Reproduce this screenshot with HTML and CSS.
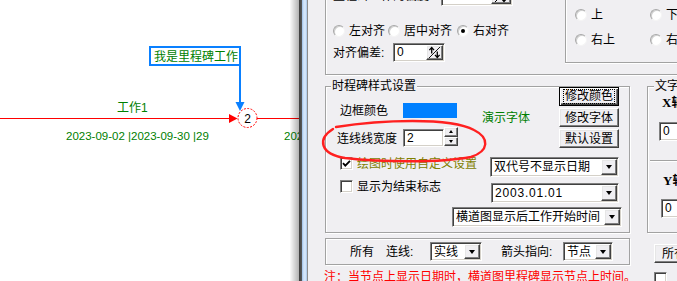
FILE: index.html
```html
<!DOCTYPE html>
<html lang="zh-CN">
<head>
    <meta charset="UTF-8">
    <meta name="viewport" content="width=device-width, initial-scale=1.0">
    <title>里程碑设置</title>
    <link rel="stylesheet" href="styles.css">
</head>
<body>
    <div class="screen">
        <!-- 横道图画布 -->
        <div class="canvas">
            <svg class="diagram" width="299" height="281" viewBox="0 0 299 281">
                <line x1="0" y1="118.5" x2="230" y2="118.5" stroke="#f00" stroke-width="1"/>
                <polygon points="229,114 229,123 237.5,118.5" fill="#f00"/>
                <line x1="257" y1="118.5" x2="299" y2="118.5" stroke="#f00" stroke-width="1"/>
                <circle cx="247.5" cy="118" r="9.5" fill="#fff" stroke="#f00" stroke-width="1" stroke-dasharray="2 1.4"/>
                <text x="247.5" y="122.5" text-anchor="middle" class="node-num">2</text>
                <rect x="150" y="47" width="90" height="18" fill="#fff" stroke="#0a80ff" stroke-width="2"/>
                <text x="154" y="61" class="label">我是里程碑工作</text>
                <line x1="240" y1="66" x2="240" y2="104" stroke="#0a80ff" stroke-width="2"/>
                <polygon points="235.5,102 244.5,102 240,111" fill="#0a80ff"/>
                <text x="117" y="112" class="label">工作1</text>
                <text x="66" y="140" class="dates">2023-09-02 |2023-09-30 |29</text>
                <text x="284" y="140" class="dates">202</text>
            </svg>
        </div>
        <div class="frame"></div>

        <!-- 对话框 -->
        <div class="dialog">
            <div class="group top-group">
                <div class="align-col">
                    <div class="offset-row">
                        <span class="offset-label">里程碑工作的偏度</span>
                        <div class="sunken offset-field">
                            <span class="field-text">10</span>
                            <span class="raised diag-btn">
                                <svg width="14" height="14" viewBox="0 0 14 14"><line x1="1" y1="13" x2="13" y2="1" stroke="#000"/><path d="M4 8V2M1.5 4.5L4 1.5 6.5 4.5" fill="none" stroke="#000" stroke-width="1.4"/><path d="M10 6v6M7.5 9.5L10 12.5 12.5 9.5" fill="none" stroke="#000" stroke-width="1.4"/></svg>
                            </span>
                        </div>
                    </div>
                    <div class="radio-row">
                        <span class="radio-item w55"><span class="radio"></span>左对齐</span>
                        <span class="radio-item w69"><span class="radio"></span>居中对齐</span>
                        <span class="radio-item"><span class="radio checked"></span>右对齐</span>
                    </div>
                    <div class="dev-row">
                        <span class="dev-label">对齐偏差:</span>
                        <div class="sunken dev-field">
                            <span class="field-text">0</span>
                            <span class="raised diag-btn small">
                                <svg width="13" height="13" viewBox="0 0 14 14"><line x1="1" y1="13" x2="13" y2="1" stroke="#000"/><path d="M4 8V2M1.5 4.5L4 1.5 6.5 4.5" fill="none" stroke="#000" stroke-width="1.4"/><path d="M10 6v6M7.5 9.5L10 12.5 12.5 9.5" fill="none" stroke="#000" stroke-width="1.4"/></svg>
                            </span>
                        </div>
                    </div>
                </div>
                <div class="pos-group">
                    <span class="radio-item"><span class="radio"></span>上</span>
                    <span class="radio-item"><span class="radio"></span>下</span>
                    <span class="radio-item"><span class="radio"></span>右上</span>
                    <span class="radio-item"><span class="radio"></span>右</span>
                </div>
            </div>

            <div class="mid">
                <div class="group style-group">
                    <span class="legend">时程碑样式设置</span>
                    <div class="sg-top">
                        <div class="sg-left">
                            <div class="color-row">
                                <span class="color-label">边框颜色</span>
                                <span class="swatch"></span>
                                <span class="demo-font">演示字体</span>
                            </div>
                            <div class="width-row">
                                <span class="width-label">连线线宽度</span>
                                <div class="sunken width-field"><span class="field-text">2</span></div>
                                <div class="spinner">
                                    <span class="raised spin-btn"><span class="tri-up"></span></span>
                                    <span class="raised spin-btn"><span class="tri-down small"></span></span>
                                </div>
                            </div>
                        </div>
                        <div class="sg-buttons">
                            <button class="btn default"><span class="focus">修改颜色</span></button>
                            <button class="btn raised">修改字体</button>
                            <button class="btn raised">默认设置</button>
                        </div>
                    </div>
                    <div class="sg-mid">
                        <div class="checks">
                            <div class="check-row olive">
                                <span class="sunken checkbox">
                                    <svg width="9" height="9" viewBox="0 0 9 9"><path d="M1 4.2L3.3 6.6 8 1.8" fill="none" stroke="#000" stroke-width="1.8"/></svg>
                                </span>
                                绘图时使用自定义设置
                            </div>
                            <div class="check-row second">
                                <span class="sunken checkbox"></span>
                                显示为结束标志
                            </div>
                        </div>
                        <div class="combos">
                            <div class="sunken combo">
                                <span class="combo-text">双代号不显示日期</span>
                                <span class="raised drop"><span class="tri-down"></span></span>
                            </div>
                            <div class="sunken combo date-combo">
                                <span class="combo-text date">2003.01.01</span>
                                <span class="raised drop"><span class="tri-down"></span></span>
                            </div>
                        </div>
                    </div>
                    <div class="sunken combo wide-combo">
                        <span class="combo-text">横道图显示后工作开始时间</span>
                        <span class="raised drop"><span class="tri-down"></span></span>
                    </div>
                </div>

                <div class="group text-group">
                    <span class="legend">文字</span>
                    <div class="axis"><span class="axis-letter">X</span>轴</div>
                    <div class="sunken axis-field"><span class="field-text">0</span></div>
                    <div class="sep"></div>
                    <div class="axis y"><span class="axis-letter">Y</span>轴</div>
                    <div class="sunken axis-field y"><span class="field-text">0</span></div>
                </div>
            </div>

            <div class="bottom">
                <div class="group line-group">
                    <span class="lg-all">所有</span>
                    <span class="lg-line">连线:</span>
                    <div class="sunken combo small-combo">
                        <span class="combo-text">实线</span>
                        <span class="raised drop"><span class="tri-down"></span></span>
                    </div>
                    <span class="lg-arrow">箭头指向:</span>
                    <div class="sunken combo small-combo node">
                        <span class="combo-text">节点</span>
                        <span class="raised drop"><span class="tri-down"></span></span>
                    </div>
                </div>
                <button class="btn raised all-btn">所有设置</button>
            </div>

            <div class="note-row">
                <span class="note">注：当节点上显示日期时，横道图里程碑显示节点上时间。</span>
                <span class="sunken checkbox note-check"></span>
            </div>
        </div>

        <!-- 手绘标注 -->
        <svg class="mark" width="677" height="281" viewBox="0 0 677 281">
            <path d="M336 127 C380 120 450 117 474 130 C490 138 489 151 471 157 C440 163 380 162 345 158 C320 154 317 139 333 129" fill="none" stroke="#ff2020" stroke-width="2.4" stroke-linecap="round"/>
        </svg>
    </div>
</body>
</html>
```

FILE: styles.css
```css
* {
    box-sizing: border-box;
}

body {
    margin: 0;
    background: #fff;
    font-family: "Liberation Sans", "Noto Sans CJK SC", sans-serif;
    font-size: 12px;
    line-height: 14px;
    color: #000;
}

.screen {
    position: relative;
    display: flex;
    width: 677px;
    height: 281px;
    overflow: hidden;
}

/* 画布 */
.canvas {
    position: relative;
    width: 299px;
    height: 281px;
    flex: none;
    background: #fff;
}

.canvas::after {
    content: "";
    position: absolute;
    top: 0;
    right: 0;
    width: 9px;
    height: 100%;
    background: linear-gradient(to right, rgba(0, 0, 0, 0.02), rgba(0, 0, 0, 0.3));
}

.diagram {
    display: block;
}

.diagram .label {
    font-family: "Liberation Sans", "Noto Sans CJK SC", sans-serif;
    font-size: 12px;
    fill: #008000;
}

.diagram .dates {
    font-family: "Liberation Sans", sans-serif;
    font-size: 11.5px;
    fill: #008000;
}

.diagram .node-num {
    font-family: "Liberation Sans", sans-serif;
    font-size: 12px;
    fill: #000;
}

.frame {
    width: 9px;
    flex: none;
    background: linear-gradient(to right, #3c3c3c 0, #5a5a5a 3px, #9dbfe8 3px, #d6e7fb 5px, #cfe2f8 7px, #9cbbe2 8px, #8d8d8d 8px);
}

/* 对话框 */
.dialog {
    width: 369px;
    flex: none;
    padding-left: 17px;
    background: #f0eff2;
    overflow: hidden;
}

.group {
    position: relative;
    border: 1px solid #a2a2a2;
    box-shadow: inset 1px 1px 0 #fff, 1px 1px 0 #fff;
}

.legend {
    position: absolute;
    top: -8px;
    left: 5px;
    padding: 0 1px;
    background: #f0eff2;
}

.sunken {
    background: #fff;
    border: 1px solid;
    border-color: #808080 #fff #fff #808080;
    box-shadow: inset 1px 1px 0 #404040, inset -1px -1px 0 #d4d0c8;
}

.raised {
    background: #f0eff2;
    border: 1px solid;
    border-color: #fff #404040 #404040 #fff;
    box-shadow: inset -1px -1px 0 #808080, inset 1px 1px 0 #e6e6e6;
}

.field-text {
    padding-left: 2px;
    line-height: 15px;
}

/* 顶部分组 */
.top-group {
    display: flex;
    width: 400px;
    height: 105px;
    margin-top: -30px;
    border-right: 0;
}

.align-col {
    width: 239px;
    flex: none;
    padding: 15px 0 0 7px;
}

.offset-row {
    display: flex;
    align-items: center;
    height: 20px;
}

.offset-label {
    width: 108px;
    flex: none;
}

.offset-field {
    display: flex;
    align-items: center;
    width: 72px;
    height: 20px;
    padding: 1px;
}

.diag-btn {
    display: flex;
    align-items: center;
    justify-content: center;
    width: 20px;
    height: 16px;
    margin-left: auto;
}

.diag-btn.small {
    width: 17px;
    height: 15px;
}

.radio-row {
    display: flex;
    align-items: center;
    height: 14px;
    margin-top: 18px;
}

.radio-item {
    display: flex;
    align-items: center;
    gap: 4px;
    white-space: nowrap;
}

.w55 {
    width: 55px;
}

.w69 {
    width: 69px;
}

.radio {
    position: relative;
    width: 12px;
    height: 12px;
    flex: none;
    border-radius: 50%;
    background: #fff;
    border: 1px solid;
    border-color: #a8a8a8 #f4f4f4 #f4f4f4 #a8a8a8;
    box-shadow: inset 1px 1px 0 #d0d0d0;
}

.radio.checked::after {
    content: "";
    position: absolute;
    top: 3px;
    left: 3px;
    width: 4px;
    height: 4px;
    border-radius: 50%;
    background: #000;
}

.dev-row {
    display: flex;
    align-items: center;
    height: 19px;
    margin-top: 5px;
}

.dev-label {
    width: 60px;
    flex: none;
}

.dev-field {
    display: flex;
    align-items: center;
    width: 52px;
    height: 19px;
    padding: 1px;
}

.pos-group {
    display: grid;
    grid-template-columns: 75px 75px;
    align-content: start;
    row-gap: 13px;
    width: 160px;
    height: 92px;
    padding: 38px 0 0 9px;
    border-left: 1px solid #a2a2a2;
    border-bottom: 1px solid #a2a2a2;
    box-shadow: inset 1px 0 0 #fff, 0 1px 0 #fff;
}

.pos-group .radio-item {
    height: 12px;
}

/* 中部分组 */
.mid {
    display: flex;
    align-items: flex-start;
    margin-top: 11px;
}

.style-group {
    width: 305px;
    height: 147px;
    flex: none;
}

.sg-top {
    display: flex;
    height: 62px;
}

.sg-left {
    width: 233px;
    flex: none;
    padding-left: 14px;
}

.color-row {
    display: flex;
    align-items: center;
    height: 15px;
    margin-top: 16px;
}

.color-label {
    width: 48px;
    flex: none;
}

.swatch {
    width: 54px;
    height: 15px;
    margin-left: 15px;
    background: #0080ff;
}

.demo-font {
    align-self: flex-start;
    margin: 8px 0 0 25px;
    color: #008000;
    white-space: nowrap;
}

.width-row {
    display: flex;
    align-items: flex-start;
    height: 21px;
    margin: 9px 0 0 -3px;
}

.width-label {
    width: 66px;
    flex: none;
    margin-top: 5px;
}

.width-field {
    display: flex;
    align-items: center;
    width: 41px;
    height: 18px;
    margin-top: 2px;
    padding: 1px;
}

.spinner {
    display: flex;
    flex-direction: column;
    width: 14px;
    height: 19px;
}

.spin-btn {
    display: flex;
    align-items: center;
    justify-content: center;
    flex: 1;
}

.tri-up {
    width: 0;
    height: 0;
    border-left: 2.5px solid transparent;
    border-right: 2.5px solid transparent;
    border-bottom: 3px solid #000;
}

.tri-down {
    width: 0;
    height: 0;
    border-left: 3.5px solid transparent;
    border-right: 3.5px solid transparent;
    border-top: 4px solid #000;
}

.tri-down.small {
    border-left-width: 2.5px;
    border-right-width: 2.5px;
    border-top-width: 3px;
}

.sg-buttons {
    display: flex;
    flex-direction: column;
    gap: 2px;
}

.btn {
    width: 60px;
    height: 19px;
    padding: 0;
    font: inherit;
    line-height: 14px;
    color: #000;
    cursor: default;
}

.btn.default {
    display: flex;
    align-items: center;
    justify-content: center;
    background: #f0eff2;
    border: 1px solid #000;
    box-shadow: inset 1px 1px 0 #fff, inset -1px -1px 0 #404040, inset -2px -2px 0 #808080;
}

.focus {
    padding: 0 1px;
    outline: 1px dotted #000;
    outline-offset: 0;
    line-height: 13px;
}

.sg-mid {
    display: flex;
    align-items: flex-start;
    margin-top: 8px;
}

.checks {
    width: 164px;
    flex: none;
    padding-left: 14px;
}

.check-row {
    display: flex;
    align-items: center;
    gap: 4px;
    height: 13px;
    white-space: nowrap;
}

.check-row.second {
    margin-top: 10px;
}

.olive {
    color: #808000;
}

.checkbox {
    display: flex;
    align-items: center;
    justify-content: center;
    width: 13px;
    height: 13px;
    flex: none;
}

.combos {
    width: 129px;
}

.combo {
    display: flex;
    align-items: center;
    height: 20px;
    padding: 1px;
}

.date-combo {
    width: 128px;
    margin: 6px 0 0 1px;
}

.combo-text {
    flex: 1;
    padding-left: 2px;
    line-height: 16px;
    white-space: nowrap;
    overflow: hidden;
}

.combo-text.date {
    letter-spacing: 0.8px;
}

.drop {
    display: flex;
    align-items: center;
    justify-content: center;
    width: 16px;
    height: 16px;
    flex: none;
}

.wide-combo {
    width: 170px;
    margin: 4px 0 0 126px;
}

.text-group {
    width: 100px;
    height: 147px;
    flex: none;
    margin-left: 17px;
    border-right: 0;
}

.text-group .legend {
    left: 6px;
}

.axis {
    margin: 9px 0 0 14px;
    font-weight: bold;
}

.axis.y {
    margin-top: 12px;
    padding-left: 1px;
}

.axis-letter {
    font-family: "Liberation Serif", serif;
    font-size: 13px;
}

.axis-field {
    display: flex;
    align-items: center;
    width: 60px;
    height: 19px;
    margin: 12px 0 0 11px;
    padding: 1px;
}

.axis-field.y {
    margin: 11px 0 0 13px;
}

.sep {
    height: 2px;
    margin: 19px 0 0 2px;
    border-top: 1px solid #a2a2a2;
    border-bottom: 1px solid #fff;
}

/* 底部 */
.bottom {
    display: flex;
    align-items: flex-start;
    margin-top: 5px;
}

.line-group {
    display: flex;
    align-items: center;
    width: 305px;
    height: 27px;
    flex: none;
    padding-left: 24px;
}

.lg-all {
    width: 36px;
    flex: none;
}

.lg-line {
    width: 44px;
    flex: none;
}

.small-combo {
    width: 52px;
    height: 19px;
}

.small-combo .drop {
    height: 15px;
}

.small-combo.node {
    width: 50px;
}

.lg-arrow {
    width: 62px;
    flex: none;
    margin-left: 19px;
}

.all-btn {
    flex: none;
    margin: 6px 0 0 24px;
    padding-left: 7px;
    text-align: left;
    white-space: nowrap;
}

.note-row {
    display: flex;
    align-items: flex-start;
    margin: 5px 0 0 -1px;
}

.note {
    width: 300px;
    flex: none;
    color: #f00;
    white-space: nowrap;
}

.note-check {
    margin: 2px 0 0 30px;
}

.mark {
    position: absolute;
    top: 0;
    left: 0;
    pointer-events: none;
}
```
